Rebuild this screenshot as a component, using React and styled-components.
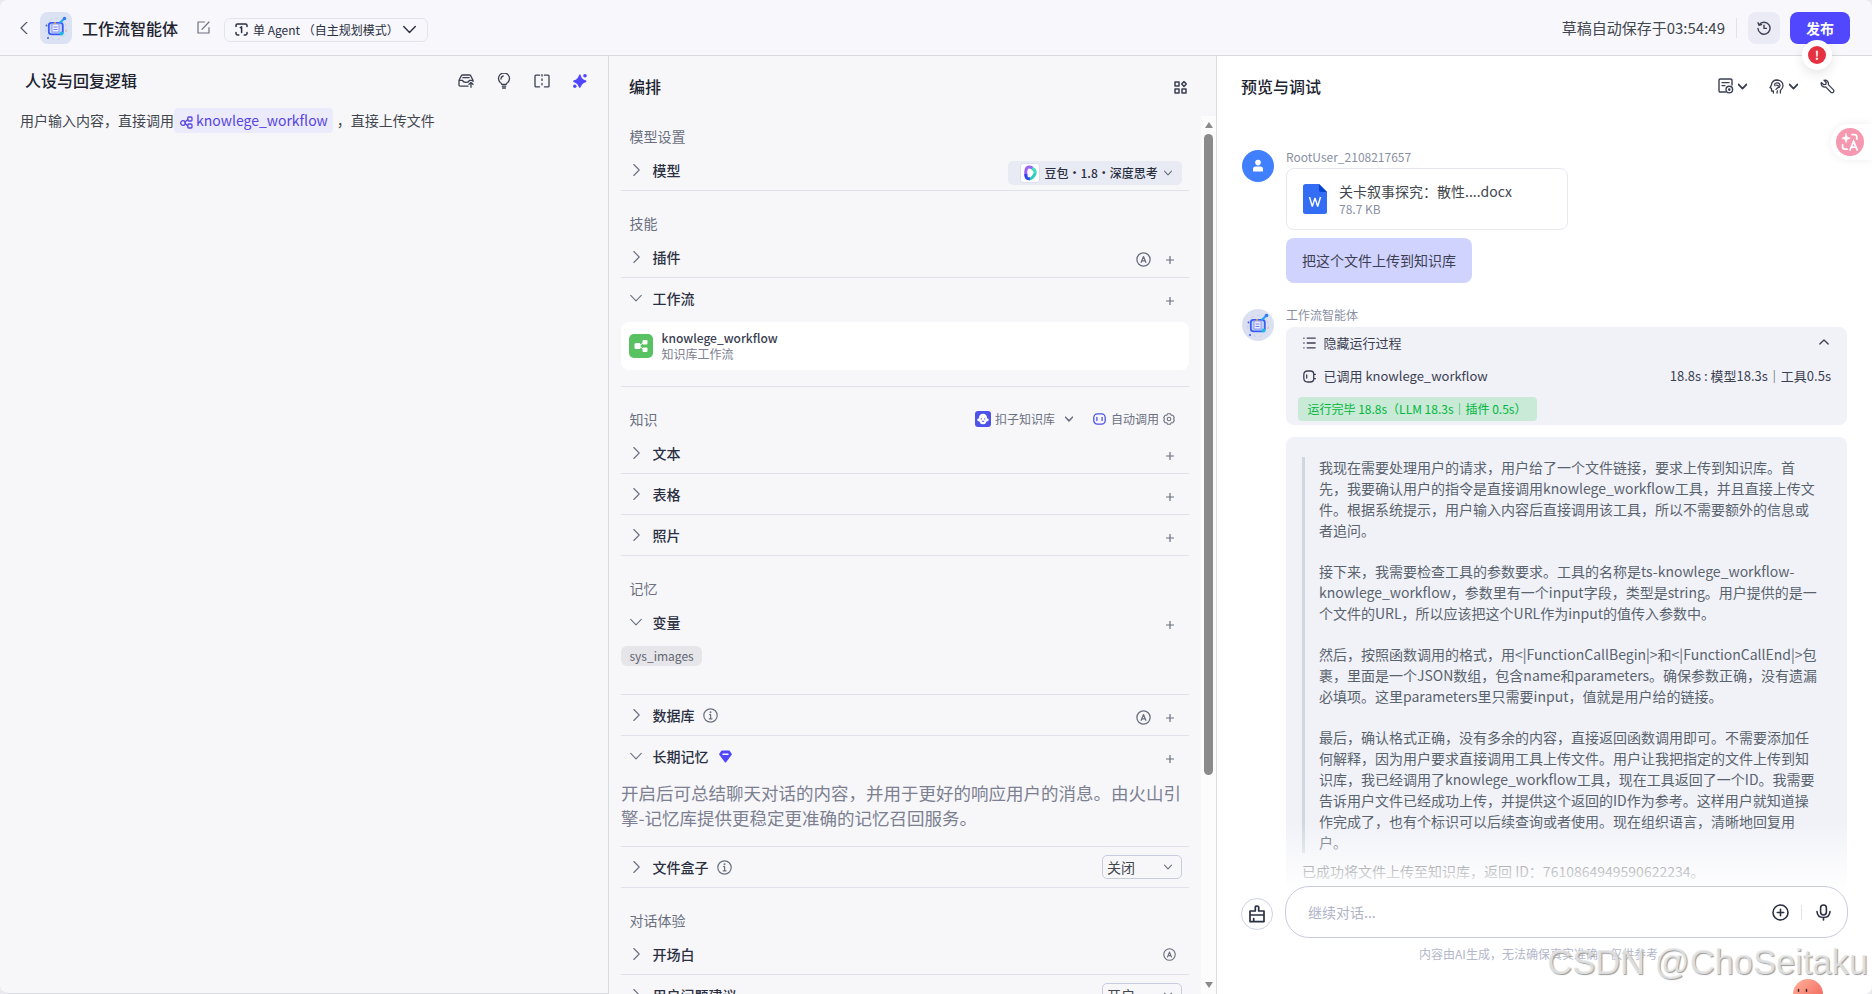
import React from "react";
import styled, { createGlobalStyle, css } from "styled-components";

const quoteParagraphs = [
  "我现在需要处理用户的请求，用户给了一个文件链接，要求上传到知识库。首先，我要确认用户的指令是直接调用knowlege_workflow工具，并且直接上传文件。根据系统提示，用户输入内容后直接调用该工具，所以不需要额外的信息或者追问。",
  "接下来，我需要检查工具的参数要求。工具的名称是ts-knowlege_workflow-knowlege_workflow，参数里有一个input字段，类型是string。用户提供的是一个文件的URL，所以应该把这个URL作为input的值传入参数中。",
  "然后，按照函数调用的格式，用<|FunctionCallBegin|>和<|FunctionCallEnd|>包裹，里面是一个JSON数组，包含name和parameters。确保参数正确，没有遗漏必填项。这里parameters里只需要input，值就是用户给的链接。",
  "最后，确认格式正确，没有多余的内容，直接返回函数调用即可。不需要添加任何解释，因为用户要求直接调用工具上传文件。用户让我把指定的文件上传到知识库，我已经调用了knowlege_workflow工具，现在工具返回了一个ID。我需要告诉用户文件已经成功上传，并提供这个返回的ID作为参考。这样用户就知道操作完成了，也有个标识可以后续查询或者使用。现在组织语言，清晰地回复用户。",
];

const Svg = ({ w = 16, h = w, box, sw = 1.3, children }) => (
  <svg
    width={w}
    height={h}
    viewBox={box || `0 0 ${w} ${h}`}
    fill="none"
    stroke="currentColor"
    strokeWidth={sw}
    strokeLinecap="round"
    strokeLinejoin="round"
  >
    {children}
  </svg>
);

const Chevron = ({ dir = "down", size = 12, sw = 1.3 }) => {
  const paths = {
    down: "M0.7 3.3L6 8.8L11.3 3.3",
    up: "M1 8.5L6 3.5L11 8.5",
    right: "M3.8 0.5L9.2 6L3.8 11.5",
    left: "M9 0L3 6L9 12",
  };
  return (
    <Svg w={size} box="0 0 12 12" sw={(sw * 12) / size}>
      <path d={paths[dir]} />
    </Svg>
  );
};

const RobotIcon = ({ size = 32 }) => (
  <svg width={size} height={size} viewBox="0 0 32 32" fill="none">
    <circle cx="16" cy="17" r="10.5" stroke="#c3c9f0" strokeWidth="0.8" strokeDasharray="3 3" />
    <rect x="8.8" y="10.8" width="14" height="11.5" rx="2.5" fill="#c4d3fb" stroke="#3b5cf5" strokeWidth="1.8" />
    <rect x="12" y="12" width="7" height="8" fill="#edf0ff" stroke="#8d94ee" />
    <path d="M13.5 15h4M13.5 17.5h4" stroke="#737be0" />
    <path d="M19.5 11l4-3.5" stroke="#24a5f2" strokeWidth="2" />
    <circle cx="24.5" cy="6.5" r="1.8" fill="#2f7bf4" />
    <circle cx="21.5" cy="21.5" r="2" fill="#17bde0" />
    <circle cx="6.5" cy="13.5" r="0.9" fill="#3b5cf5" />
    <circle cx="8" cy="26" r="1" fill="#3b5cf5" />
    <circle cx="15" cy="11" r="1" fill="#f7a64b" />
    <circle cx="26" cy="19" r="0.8" fill="#f2b37a" />
  </svg>
);

const PlusIcon = () => (
  <Svg w={8} sw={1.2}>
    <path d="M4 0.3v7.4M0.3 4h7.4" />
  </Svg>
);

const AutoIcon = ({ size = 15 }) => (
  <Svg w={size} box="0 0 15 15" sw={1.3}>
    <circle cx="7.5" cy="7.5" r="6.6" />
    <path d="M5.2 10.3L7.5 4.6l2.3 5.7M6 8.8h3" />
  </Svg>
);

const InfoIcon = () => (
  <Svg w={15} sw={1.2}>
    <circle cx="7.5" cy="7.5" r="6.7" />
    <path d="M6.6 6.7h1v4M6.2 10.8h2.8" />
    <circle cx="7.5" cy="4.3" r="0.4" fill="currentColor" />
  </Svg>
);

const WorkflowIcon = () => (
  <Svg w={13} h={14} sw={1.3}>
    <circle cx="3" cy="8" r="2.3" />
    <rect x="7.8" y="2" width="4.2" height="4" rx="1" />
    <rect x="7.8" y="9" width="4.2" height="4" rx="1" />
    <path d="M5 7L7.8 4.5M5.200 8.600L7.800 11" />
  </Svg>
);

const Row = ({ title, open, extra, children }) => (
  <RowHead>
    <ArrowBox>
      <Chevron dir={open ? "down" : "right"} size={12} sw={1.1} />
    </ArrowBox>
    <RowTitle>{title}</RowTitle>
    {extra}
    {children}
  </RowHead>
);

const Actions = ({ auto, plus = true }) => (
  <RowActions $plus={plus}>
    {auto && <AutoIcon size={plus ? 15 : 13} />}
    {plus && <PlusIcon />}
  </RowActions>
);

const App = () => {
  return (
    <Page>
      <GlobalStyle />
      <Header>
        <Chevron dir="left" size={12} sw={1.2} />
        <BotLogo>
          <RobotIcon />
        </BotLogo>
        <BotName>工作流智能体</BotName>
        <EditButton>
          <Svg w={13} sw={1.2}>
            <path d="M7.5 1H1v11h11V6.5M5 8.3L12 1" />
          </Svg>
        </EditButton>
        <ModePill>
          <Svg w={13} sw={1.5}>
            <path d="M1 3.6V2.4Q1 1 2.4 1h8.2Q12 1 12 2.4v1.2M1 9.4v1.2Q1 12 2.4 12h1.4M12 9.4v1.2Q12 12 10.6 12H9.2M5.3 4.6L6.6 3.8V9.4" />
          </Svg>
          <span>单 Agent （自主规划模式）</span>
          <Chevron size={13} sw={1.4} />
        </ModePill>
        <HeaderRight>
          <SaveTip>草稿自动保存于03:54:49</SaveTip>
          <HeaderLine />
          <HistoryButton>
            <Svg w={14} sw={1.4}>
              <path d="M2.2 3.6A6 6 0 1 1 1 7.5M1 1.8l1 2.4 2.6-.6M7 4.2V7.4h2.4" />
            </Svg>
          </HistoryButton>
          <PublishButton>
            发布
            <ErrorBadge>
              <ErrorDot>!</ErrorDot>
            </ErrorBadge>
          </PublishButton>
        </HeaderRight>
      </Header>

      <Body>
        <PromptPanel>
          <PromptHead>
            <PanelTitle>人设与回复逻辑</PanelTitle>
            <PromptTools>
              <Svg w={16}>
                <path d="M10 13.2H2.2Q1 13.2 1 12V7.2L3.4 2.6Q3.7 2 4.4 2h7.2q.7 0 1 .6L15 7.2v1.3M1 7.4h3.6q.4 2 3.4 2t3.4-2H15M4.8 4.6h6.4M13 14.3V9.6M11 11.2l2-1.8 2 1.8" />
              </Svg>
              <Svg w={16}>
                <path d="M5.8 11.3Q5.6 10.2 4.2 9.500A5.500 5.500 0 1 1 11.800 9.500Q10.4 10.2 10.2 11.3zM6.3 13.2h3.4M6.6 15h2.8M5 6A3 3 0 0 1 7.2 3" />
              </Svg>
              <Svg w={16}>
                <path d="M5.6 2.2H1.9Q1 2.2 1 3.1v9.8q0 .9.9.9h3.7M10.4 2.2h3.7q.9 0 .9.9v9.8q0 .9-.9.9h-3.7" />
                <path d="M8 1.6v13" strokeDasharray="1.4 3" />
              </Svg>
              <SparkIcon viewBox="0 0 16 16">
                <path d="M7.8 2.6Q8.8 7 13.4 8.2Q9 9.400 7.800 13.800Q6.600 9.400 2.200 8.2Q6.800 7 7.800 2.600z" stroke="#5147ff" strokeWidth="2" strokeLinejoin="round" />
                <circle cx="13" cy="2.8" r="1.8" />
                <circle cx="2.8" cy="13.2" r="1.7" />
              </SparkIcon>
            </PromptTools>
          </PromptHead>
          <PromptText>
            用户输入内容，直接调用
            <FlowTag>
              <WorkflowIcon />
              knowlege_workflow
            </FlowTag>
            ，直接上传文件
          </PromptText>
        </PromptPanel>

        <ConfigPanel>
          <ConfigHead>
            <PanelTitle>编排</PanelTitle>
            <Svg w={13} sw={1.5}>
              <rect x="1" y="1" width="4" height="4" />
              <rect x="1" y="8" width="4" height="4" />
              <rect x="8" y="8" width="4" height="4" />
              <path d="M10 0.6L12.3 3 10 5.4 7.7 3z" />
            </Svg>
          </ConfigHead>
          <ConfigScroll>
            <ConfigList>
              <SectionTitle $first>模型设置</SectionTitle>
              <Row title="模型">
                <ModelChip>
                  <ModelLogo>
                    <svg width="14" height="16" viewBox="0 0 14 16" fill="none" strokeWidth="3">
                      <path d="M3 11Q1.6 2 6.5 2Q9 2 9.5 4" stroke="#9a62f8" />
                      <path d="M9 3.5Q13 5 12 9" stroke="#43dcc0" />
                      <path d="M12 8.5Q10 13.5 6 14" stroke="#27cdb8" />
                      <path d="M2.8 9Q2.5 14 6.8 13.8" stroke="#3346ee" />
                    </svg>
                  </ModelLogo>
                  <span>豆包・1.8・深度思考</span>
                  <SmallArrow>
                    <Chevron size={8} sw={1.1} />
                  </SmallArrow>
                </ModelChip>
              </Row>
              <Divider />

              <SectionTitle>技能</SectionTitle>
              <Row title="插件">
                <Actions auto />
              </Row>
              <Divider />
              <Row title="工作流" open>
                <Actions />
              </Row>
              <FlowCard>
                <FlowLogo>
                  <svg width="14" height="14" viewBox="0 0 14 14" fill="#fff">
                    <rect x="0.5" y="4" width="6" height="6" rx="1.5" />
                    <rect x="8.5" y="1" width="5" height="4.6" rx="1" />
                    <rect x="8.5" y="8.4" width="5" height="4.6" rx="1" />
                    <path d="M5 7L10 3.4M5 7l5 3.6" stroke="#fff" />
                  </svg>
                </FlowLogo>
                <FlowInfo>
                  <FlowName>knowlege_workflow</FlowName>
                  <FlowDesc>知识库工作流</FlowDesc>
                </FlowInfo>
              </FlowCard>
              <Divider />

              <SectionTitle>
                知识
                <KnowledgeTools>
                  <KnowledgeLogo>
                    <svg width="12" height="12" viewBox="0 0 12 12">
                      <path d="M6 0.8Q10 1 10 5.2Q11.8 5.4 11.8 7Q11.6 8.4 9.6 8.4Q9 11 6 11.2Q3 11 2.4 8.4Q.4 8.4.2 7Q.2 5.4 2 5.2Q2 1 6 .8z" fill="#fff" />
                      <path d="M4.3 5.3v1.2M7.7 5.3v1.2M4.8 8Q6 9 7.2 8" stroke="#4d53e8" fill="none" />
                    </svg>
                  </KnowledgeLogo>
                  <span>扣子知识库</span>
                  <KnowledgeArrow>
                    <Chevron size={8} sw={1.6} />
                  </KnowledgeArrow>
                  <CallIcon>
                    <Svg w={13} h={12} sw={1.3}>
                      <rect x="0.8" y="0.9" width="11.4" height="10.2" rx="3.6" />
                      <path d="M3.9 4.3v3.2M9.1 4.3v3.2" />
                    </Svg>
                  </CallIcon>
                  <span>自动调用</span>
                  <GearBox>
                    <Svg w={12} sw={1.1}>
                      <path d="M4.6.8h2.8l.8 1.4 1.700.1L11.300 4.600 10.600 6l.7 1.400-1.400 2.300-1.700.1-.8 1.400H4.600l-.8-1.400-1.700-.1L.7 7.400 1.400 6 .7 4.600 2.100 2.300l1.700-.1z" />
                      <circle cx="6" cy="6" r="1.8" />
                    </Svg>
                  </GearBox>
                </KnowledgeTools>
              </SectionTitle>
              <Row title="文本">
                <Actions />
              </Row>
              <Divider />
              <Row title="表格">
                <Actions />
              </Row>
              <Divider />
              <Row title="照片">
                <Actions />
              </Row>
              <Divider />

              <SectionTitle>记忆</SectionTitle>
              <Row title="变量" open>
                <Actions />
              </Row>
              <VarTag>sys_images</VarTag>
              <Divider />
              <Row
                title="数据库"
                extra={
                  <ExtraIcon>
                    <InfoIcon />
                  </ExtraIcon>
                }
              >
                <Actions auto />
              </Row>
              <Divider />
              <Row
                title="长期记忆"
                open
                extra={
                  <ExtraIcon $gem>
                    <svg width="13" height="13" viewBox="0 0 13 13">
                      <path d="M3 .5h7q.5 0 .8.4l1.9 2.8q.4.5 0 1L7.1 12.2q-.6.7-1.2 0L.3 4.7q-.3-.5 0-1L2.2.9Q2.5.5 3 .5z" fill="#5147ff" />
                      <path d="M4 4.3h5" stroke="#fff" strokeWidth="1.4" strokeLinecap="round" />
                    </svg>
                  </ExtraIcon>
                }
              >
                <Actions />
              </Row>
              <MemoryText>
                开启后可总结聊天对话的内容，并用于更好的响应用户的消息。由火山引擎-记忆库提供更稳定更准确的记忆召回服务。
              </MemoryText>
              <Divider />
              <Row
                title="文件盒子"
                extra={
                  <ExtraIcon>
                    <InfoIcon />
                  </ExtraIcon>
                }
              >
                <Select>
                  关闭
                  <SmallArrow>
                    <Chevron size={8} sw={1.1} />
                  </SmallArrow>
                </Select>
              </Row>
              <Divider />

              <SectionTitle>对话体验</SectionTitle>
              <Row title="开场白">
                <Actions auto plus={false} />
              </Row>
              <Divider />
              <Row title="用户问题建议">
                <Select>
                  开启
                  <SmallArrow>
                    <Chevron size={8} sw={1.1} />
                  </SmallArrow>
                </Select>
              </Row>
            </ConfigList>
            <ScrollBar>
              <ScrollArrow />
              <ScrollThumb />
              <ScrollArrow $down />
            </ScrollBar>
          </ConfigScroll>
        </ConfigPanel>

        <PreviewPanel>
          <PreviewHead>
            <PanelTitle>预览与调试</PanelTitle>
            <PreviewTools>
              <Svg w={16} sw={1.4}>
                <path d="M7.4 14H2.3Q1 14 1 12.7V2.3Q1 1 2.3 1h10.4Q14 1 14 2.3V7M4 4.6h7M4 7.6h3" />
                <circle cx="11.3" cy="11.6" r="3.3" />
                <circle cx="11.3" cy="11.6" r="0.6" fill="currentColor" />
              </Svg>
              <Chevron size={9} sw={1.8} />
              <HeadIcon>
                <Svg w={15} sw={1.3}>
                  <path d="M4.4 14v-2H2.5V9.3L1 8.6l1.4-2.5Q3 1 8 1q5.8.4 6 5.8 0 2.6-2.6 4.6V14M8.4 12l-.4 2" />
                  <path d="M6 6.8Q5 4.2 7.8 3.8q3-.2 3.2 2.6Q10.8 8.6 8.6 8.8L7 10.4M7.6 6.2l1.8.6" />
                </Svg>
              </HeadIcon>
              <Chevron size={9} sw={1.8} />
              <WrenchIcon>
                <Svg w={15} sw={1.3}>
                  <path d="M4 1.300Q6 .6 7.500 2.200 8.800 3.600 8.300 5.600L13.500 10.900q.8 1.200-.2 2.300-1.200.9-2.400 0L5.700 7.900Q3.700 8.400 2.200 7 .7 5.500 1.400 3.500L3.700 5.700 5.800 5.400 6.200 3.500z" />
                </Svg>
              </WrenchIcon>
            </PreviewTools>
          </PreviewHead>

          <Messages>
            <Message>
              <UserAvatar>
                <svg width="12" height="14" viewBox="0 0 12 14" fill="#fff">
                  <circle cx="6" cy="3.6" r="2.8" />
                  <path d="M1 12V10.4Q1 7.6 3.8 7.6h4.4Q11 7.6 11 10.4V12q0 .6-.6.6H1.6Q1 12.600 1 12z" />
                </svg>
              </UserAvatar>
              <MessageBody>
                <Sender $user>RootUser_2108217657</Sender>
                <FileCard>
                  <svg width="24" height="30" viewBox="0 0 24 30">
                    <path d="M2.500 0H16l8 8v19.500q0 2.500-2.500 2.500h-19Q0 30 0 27.500v-25Q0 0 2.500 0z" fill="#336df4" />
                    <path d="M16 0l8 8h-6q-2 0-2-2z" fill="#0442d2" />
                    <path d="M6.500 13l2.800 9.500L12 14l2.700 8.500L17.500 13" fill="none" stroke="#fff" strokeWidth="1.400" strokeLinejoin="bevel" />
                  </svg>
                  <div>
                    <FileName>关卡叙事探究：散性....docx</FileName>
                    <FileSize>78.7 KB</FileSize>
                  </div>
                </FileCard>
                <UserBubble>把这个文件上传到知识库</UserBubble>
              </MessageBody>
            </Message>

            <Message>
              <BotAvatar>
                <RobotIcon />
              </BotAvatar>
              <MessageBody>
                <Sender>工作流智能体</Sender>
                <RunCard>
                  <RunLine>
                    <Svg w={13} h={12} sw={1.3}>
                      <path d="M4.200 1.200h8M4.200 6h8M4.200 10.800h8M.8 1.200h.3M.8 6h.3M.8 10.800h.3" />
                    </Svg>
                    <span>隐藏运行过程</span>
                    <RunRight $arrow>
                      <Chevron dir="up" size={10} sw={1.3} />
                    </RunRight>
                  </RunLine>
                  <RunLine $second>
                    <Svg w={13} h={13} sw={1.3}>
                      <path d="M10.700 3.300Q10.300 1 7.500 1H4.700Q.8 1 .8 5v3q0 4 3.900 4h2.800q2.800 0 3.200-2.300M3.700 5v3M10.700 3.300v6.400M10.800 4.300h1.600M10.800 8.700h1.600" />
                    </Svg>
                    <span>已调用 knowlege_workflow</span>
                    <RunRight>18.8s : 模型18.3s｜工具0.5s</RunRight>
                  </RunLine>
                  <RunTag>运行完毕 18.8s（LLM 18.3s｜插件 0.5s）</RunTag>
                </RunCard>
                <AnswerCard>
                  <Quote>
                    {quoteParagraphs.map((text, i) => (
                      <p key={i}>{text}</p>
                    ))}
                  </Quote>
                  <Answer>已成功将文件上传至知识库，返回 ID：7610864949590622234。</Answer>
                </AnswerCard>
              </MessageBody>
            </Message>
            <Fade />
          </Messages>

          <InputRow>
            <ClearButton>
              <Svg w={16} h={18} sw={1.700}>
                <path d="M6.300 6V2.200Q6.300 1 8 1t1.700 1.200V6H15v10.600H1V6zM1 10h14M4.700 13.600v3" />
              </Svg>
            </ClearButton>
            <ChatInput>
              <Placeholder>继续对话...</Placeholder>
              <Svg w={17} sw={1.600}>
                <circle cx="8.500" cy="8.500" r="7.500" />
                <path d="M8.500 5.300v6.400M5.300 8.500h6.400" />
              </Svg>
              <InputLine />
              <Svg w={15} h={17} sw={1.600}>
                <rect x="4.600" y="1" width="5.800" height="10" rx="2.900" />
                <path d="M1 7.500q.4 6 6.500 6T14 7.500M7.500 13.500V16" />
              </Svg>
            </ChatInput>
          </InputRow>
          <Disclaimer>内容由AI生成，无法确保真实准确，仅供参考。</Disclaimer>

          <TranslateTab>
            <TranslateDot>
              <svg width="18" height="18" viewBox="0 0 18 18" fill="none" stroke="#fff" strokeWidth="1.800" strokeLinecap="round">
                <path d="M5 .8L6.100 4 9.300 5.200 6.100 6.400 5 9.600 3.900 6.400.8 5.200 3.900 4z" fill="#fff" strokeWidth=".6" />
                <path d="M11 1.600h2.500q2.300 0 2.300 2.200V6M1.600 12v1.800q0 2.400 2.400 2.400h2" />
                <path d="M9 17l3.600-8.600L16.200 17M10.300 14.200h4.600" />
              </svg>
            </TranslateDot>
          </TranslateTab>
          <Mascot>
            <svg width="30" height="15" viewBox="0 0 30 15">
              <defs>
                <linearGradient id="mascot" x1="0" y1="0" x2="1" y2="1">
                  <stop offset="0.1" stopColor="#ffab95" />
                  <stop offset="0.8" stopColor="#f26a60" />
                </linearGradient>
              </defs>
              <circle cx="15" cy="15" r="15" fill="url(#mascot)" />
              <path d="M5.500 10.500v1.800M13.500 10.500v1.800" stroke="#3a2020" strokeWidth="1.500" strokeLinecap="round" />
            </svg>
          </Mascot>
          <Watermark>CSDN @ChoSeitaku</Watermark>
        </PreviewPanel>
      </Body>
    </Page>
  );
};

export default App;

const GlobalStyle = createGlobalStyle`
  * {
    box-sizing: border-box;
  }

  body {
    margin: 0;
    background: #e9e9ee;
    overflow: hidden;
    font-family: "Noto Sans CJK SC", "Noto Sans", sans-serif;
    color: #2b2f42;
  }

  svg {
    display: block;
    flex-shrink: 0;
  }
`;

const Page = styled.div`
  display: flex;
  flex-direction: column;
  width: 100vw;
  height: 100vh;
  overflow: hidden;
  border-radius: 8px;
  background: #f7f7fa;
`;

const Header = styled.header`
  display: flex;
  align-items: center;
  height: 56px;
  flex-shrink: 0;
  padding: 0 22px 0 18px;
  border-bottom: 1px solid #dadae1;
  background: #f7f7fc;
  color: #55586a;
`;

const BotLogo = styled.div`
  width: 32px;
  height: 32px;
  margin-left: 10px;
  border-radius: 8px;
  background: #dbe2f1;
`;

const BotName = styled.div`
  margin-left: 10px;
  font-size: 16px;
  font-weight: 500;
  line-height: 24px;
  color: #20232f;
`;

const EditButton = styled.div`
  margin-left: 19px;
  color: #6e7080;
`;

const ModePill = styled.div`
  display: flex;
  align-items: center;
  width: 204px;
  height: 24px;
  margin: 4px 0 0 14px;
  padding: 0 11px 0 10px;
  border: 1px solid #e4e4ec;
  border-radius: 6px;
  font-size: 12px;
  color: #2b2f42;

  span {
    flex: 1;
    margin-left: 5px;
    white-space: nowrap;
  }
`;

const HeaderRight = styled.div`
  display: flex;
  align-items: center;
  margin-left: auto;
`;

const SaveTip = styled.div`
  font-size: 15px;
  color: #42464e;
`;

const HeaderLine = styled.div`
  width: 1px;
  height: 20px;
  margin: 0 11px;
  background: #e2e2ea;
`;

const HistoryButton = styled.div`
  display: flex;
  align-items: center;
  justify-content: center;
  width: 32px;
  height: 32px;
  margin-right: 10px;
  border-radius: 8px;
  background: #ebebf5;
  color: #3b3f52;
`;

const PublishButton = styled.div`
  position: relative;
  width: 60px;
  height: 32px;
  border-radius: 8px;
  background: #5147ff;
  color: #fff;
  font-size: 14px;
  font-weight: 700;
  line-height: 32px;
  text-align: center;
`;

const ErrorBadge = styled.div`
  position: absolute;
  z-index: 2;
  top: 28px;
  left: 12px;
  display: flex;
  align-items: center;
  justify-content: center;
  width: 30px;
  height: 30px;
  border-radius: 50%;
  background: #fff;
  box-shadow: 0 4px 12px rgba(0, 0, 0, 0.1);
`;

const ErrorDot = styled.div`
  width: 18px;
  height: 18px;
  border-radius: 50%;
  background: #e53241;
  font-size: 12px;
  line-height: 17px;
`;

const Body = styled.div`
  display: flex;
  flex: 1;
  min-height: 0;
`;

const PromptPanel = styled.section`
  width: 609px;
  flex-shrink: 0;
  border-right: 1px solid #dadae1;
  border-bottom: 1px solid #dadae1;
  border-radius: 0 0 0 8px;
`;

const PromptHead = styled.div`
  display: flex;
  align-items: center;
  justify-content: space-between;
  height: 50px;
  padding: 0 20px 0 25px;
`;

const PanelTitle = styled.div`
  padding-bottom: 2px;
  font-size: 16px;
  font-weight: 500;
  line-height: 24px;
  color: #20232f;
`;

const PromptTools = styled.div`
  display: flex;
  gap: 22px;
  color: #3b3f52;
`;

const SparkIcon = styled.svg`
  width: 16px;
  height: 16px;
  fill: #5147ff;
`;

const PromptText = styled.div`
  display: flex;
  align-items: flex-start;
  padding: 2px 20px;
  font-size: 14px;
  line-height: 24px;
  color: #42464e;
`;

const FlowTag = styled.span`
  display: flex;
  align-items: flex-start;
  gap: 3px;
  height: 25px;
  margin-right: 4px;
  padding: 0 5px 0 6px;
  border-radius: 4px;
  background: #ebebfb;
  color: #5744e0;

  svg {
    margin-top: 7px;
  }
`;

const ConfigPanel = styled.section`
  display: flex;
  flex-direction: column;
  width: 608px;
  flex-shrink: 0;
  border-right: 1px solid #dadae1;
`;

const ConfigHead = styled.div`
  display: flex;
  align-items: center;
  justify-content: space-between;
  height: 60px;
  flex-shrink: 0;
  padding: 2px 29px 0 20px;
  color: #3b3f52;
`;

const ConfigScroll = styled.div`
  display: flex;
  flex: 1;
  min-height: 0;
  overflow: hidden;
`;

const ConfigList = styled.div`
  width: 592px;
  padding: 0 12px;
  color: #6b7080;
`;

const SectionTitle = styled.div`
  display: flex;
  align-items: center;
  height: ${(props) => (props.$first ? "34px" : "46px")};
  padding: ${(props) => (props.$first ? "6px" : "18px")} 8px 0 8.5px;
  font-size: 14px;
  line-height: 20px;
  color: #6b7080;
`;

const Divider = styled.div`
  height: 1px;
  background: #e1e1eb;
`;

const RowHead = styled.div`
  display: flex;
  align-items: center;
  height: 40px;
  padding: 0 7px 0 9px;
`;

const ArrowBox = styled.div`
  width: 22.5px;
`;

const RowTitle = styled.div`
  font-size: 14px;
  font-weight: 500;
  line-height: 20px;
  color: #2b2f42;
`;

const ExtraIcon = styled.div`
  margin-left: ${(props) => (props.$gem ? "10px" : "8px")};
`;

const RowActions = styled.div`
  display: flex;
  align-items: center;
  gap: 15px;
  margin-left: auto;
  padding: ${(props) => (props.$plus ? "5px 8px 0 0" : "0 6px 0 0")};
`;

const SmallArrow = styled.div`
  color: #6b7080;
`;

const ModelChip = styled.div`
  display: flex;
  align-items: center;
  width: 174px;
  height: 24px;
  margin: 6px 0 0 auto;
  padding: 0 10px 0 12px;
  border-radius: 5px;
  background: #e8ebf3;
  font-size: 12px;
  font-weight: 500;
  line-height: 18px;
  color: #2b2f42;

  span {
    flex: 1;
    margin-left: 4.5px;
    padding-bottom: 1px;
    white-space: nowrap;
  }
`;

const ModelLogo = styled.div`
  display: flex;
  align-items: center;
  justify-content: center;
  width: 20px;
  height: 20px;
  border: 1px solid #dcdfee;
  border-radius: 3px;
  background: #fff;
`;

const FlowCard = styled.div`
  display: flex;
  align-items: center;
  height: 48px;
  margin: 4px 0 16px;
  padding: 0 8px;
  border-radius: 8px;
  background: #fff;
`;

const FlowLogo = styled.div`
  display: flex;
  align-items: center;
  justify-content: center;
  width: 24px;
  height: 24px;
  border-radius: 5px;
  background: #58c162;
`;

const FlowInfo = styled.div`
  margin-left: 8.5px;
  font-size: 12px;
  line-height: 16px;
`;

const FlowName = styled.div`
  font-weight: 500;
  color: #3b3f52;
`;

const FlowDesc = styled.div`
  color: #7c8090;
`;

const KnowledgeTools = styled.div`
  display: flex;
  align-items: center;
  margin-left: auto;
  padding-right: 6px;
  font-size: 12px;
`;

const KnowledgeLogo = styled.div`
  display: flex;
  align-items: center;
  justify-content: center;
  width: 16px;
  height: 16px;
  margin-right: 4px;
  border-radius: 3px;
  background: #4d53e8;
`;

const KnowledgeArrow = styled.div`
  margin: 0 20px 0 10px;
`;

const CallIcon = styled.div`
  margin-right: 5px;
  color: #4d53e8;
`;

const GearBox = styled.div`
  margin-left: 4px;
`;

const VarTag = styled.div`
  width: fit-content;
  height: 20px;
  margin: 4px 0 28px;
  padding: 0 8.5px;
  border-radius: 6px;
  background: #e6e6ea;
  font-size: 12px;
  line-height: 20px;
  color: #62656f;
`;

const MemoryText = styled.div`
  width: 566px;
  margin: 4px 0 16px;
  font-size: 17.5px;
  line-height: 25px;
  color: #7c8090;
`;

const Select = styled.div`
  display: flex;
  align-items: center;
  justify-content: space-between;
  width: 80px;
  height: 24px;
  margin-left: auto;
  padding: 0 9px 0 4px;
  border: 1px solid #c9ccdf;
  border-radius: 5px;
  font-size: 14px;
  line-height: 20px;
  color: #42464e;
`;

const ScrollBar = styled.div`
  display: flex;
  flex-direction: column;
  align-items: center;
  width: 15px;
  padding: 6px 0;
  background: #fcfcfd;
`;

const ScrollArrow = styled.div`
  width: 0;
  height: 0;
  border-left: 4.5px solid transparent;
  border-right: 4.5px solid transparent;
  ${(props) =>
    props.$down
      ? css`
          margin-top: auto;
          border-top: 6px solid #8b8b8b;
        `
      : css`
          border-bottom: 6px solid #8b8b8b;
        `}
`;

const ScrollThumb = styled.div`
  width: 9px;
  height: 641px;
  margin-top: 6px;
  border-radius: 5px;
  background: #8b8b8b;
`;

const PreviewPanel = styled.section`
  position: relative;
  display: flex;
  flex-direction: column;
  flex: 1;
  min-width: 0;
  background: #fff;
`;

const PreviewHead = styled.div`
  display: flex;
  align-items: center;
  justify-content: space-between;
  height: 60px;
  flex-shrink: 0;
  padding: 2px 37px 0 24px;
`;

const PreviewTools = styled.div`
  display: flex;
  align-items: center;
  gap: 4px;
  margin-top: -2px;
  color: #3b3f52;
`;

const HeadIcon = styled.div`
  margin: 0 1px 0 18px;
`;

const WrenchIcon = styled.div`
  margin-left: 18px;
`;

const Messages = styled.div`
  position: relative;
  height: 770px;
  flex-shrink: 0;
  overflow: hidden;
  padding: 34px 25px 0 24px;
`;

const Message = styled.div`
  display: flex;
  gap: 12px;
  margin-bottom: 24px;
`;

const UserAvatar = styled.div`
  display: flex;
  align-items: center;
  justify-content: center;
  width: 32px;
  height: 32px;
  margin-left: 1px;
  border-radius: 50%;
  background: #4080ff;
`;

const BotAvatar = styled(UserAvatar)`
  margin-top: 2px;
  background: #dbe0f1;
`;

const MessageBody = styled.div`
  flex: 1;
`;

const Sender = styled.div`
  height: 18px;
  font-size: 12px;
  line-height: ${(props) => (props.$user ? "13px" : "15px")};
  color: #8a8fa3;
`;

const FileCard = styled.div`
  display: flex;
  align-items: center;
  gap: 12px;
  width: 282px;
  height: 62px;
  padding: 0 16px;
  border: 1px solid #e7e7ef;
  border-radius: 8px;
`;

const FileName = styled.div`
  font-size: 14px;
  line-height: 20px;
  color: #42464e;
`;

const FileSize = styled.div`
  font-size: 12px;
  line-height: 16px;
  color: #8a8fa3;
`;

const UserBubble = styled.div`
  width: fit-content;
  height: 45px;
  margin-top: 8px;
  padding: 0 16px;
  border-radius: 8px;
  background: #d1d3ff;
  font-size: 14px;
  line-height: 45px;
  color: #3b3f52;
`;

const RunCard = styled.div`
  height: 98px;
  margin-top: 2px;
  border-radius: 8px;
  background: #f1f2f8;
`;

const RunLine = styled.div`
  display: flex;
  align-items: center;
  gap: 8px;
  height: ${(props) => (props.$second ? "34px" : "32px")};
  padding: 0 16px 0 16.5px;
  font-size: 13px;
  line-height: 18px;
  color: #3b3f52;

  span {
    padding-bottom: 1px;
  }
`;

const RunRight = styled.div`
  margin-left: auto;
  padding: ${(props) => (props.$arrow ? "0 2px 2px 0" : "0 0 1px 0")};
`;

const RunTag = styled.div`
  width: 239px;
  height: 24px;
  margin: 4px 0 0 12px;
  padding-left: 9.5px;
  border-radius: 4px;
  background: #c8ead6;
  font-size: 12px;
  line-height: 24px;
  white-space: nowrap;
  color: #00b63d;
`;

const AnswerCard = styled.div`
  height: 500px;
  margin-top: 12px;
  padding: 20px 16px;
  border-radius: 8px 8px 0 0;
  background: #f1f2f8;
`;

const Quote = styled.div`
  display: flex;
  flex-direction: column;
  gap: 20px;
  width: 517px;
  padding-left: 14px;
  border-left: 3px solid #d0d7de;
  font-size: 14px;
  line-height: 21px;
  color: #59636e;

  p {
    margin: 0;
  }
`;

const Answer = styled.div`
  margin-top: 7px;
  font-size: 14px;
  line-height: 22px;
  color: #2b2f36;
`;

const Fade = styled.div`
  position: absolute;
  right: 0;
  bottom: 0;
  left: 0;
  height: 64px;
  background: linear-gradient(rgba(255, 255, 255, 0), rgba(255, 255, 255, 0.92));
`;

const InputRow = styled.div`
  display: flex;
  align-items: center;
  gap: 12px;
  padding: 0 24px;
`;

const ClearButton = styled.div`
  display: flex;
  align-items: center;
  justify-content: center;
  width: 32px;
  height: 32px;
  margin-top: 4px;
  border: 1px solid #cfd2e2;
  border-radius: 50%;
  color: #2b2f42;
`;

const ChatInput = styled.div`
  display: flex;
  align-items: center;
  flex: 1;
  height: 52px;
  padding: 0 16px 0 22px;
  border: 1px solid #c9ccdf;
  border-radius: 24px;
  color: #2b2f42;
`;

const Placeholder = styled.div`
  flex: 1;
  font-size: 14px;
  color: #b0b4c8;
`;

const InputLine = styled.div`
  width: 1px;
  height: 15px;
  margin: 0 14px 0 12px;
  background: #e2e2ea;
`;

const Disclaimer = styled.div`
  margin-top: 7px;
  font-size: 12px;
  line-height: 18px;
  text-align: center;
  color: #b3b7ca;
`;

const TranslateTab = styled.div`
  position: absolute;
  top: 68px;
  right: 0;
  width: 41px;
  height: 36px;
  padding: 4px 5px;
  border-radius: 18px 0 0 18px;
  background: #fff;
  box-shadow: 0 0 8px rgba(0, 0, 0, 0.07);
`;

const TranslateDot = styled.div`
  display: flex;
  align-items: center;
  justify-content: center;
  width: 28px;
  height: 28px;
  border-radius: 50%;
  background: #f598b0;
`;

const Mascot = styled.div`
  position: absolute;
  right: 49px;
  bottom: 0;
`;

const Watermark = styled.div`
  position: absolute;
  right: 4px;
  bottom: 14px;
  font-family: "Liberation Sans", Arial, sans-serif;
  font-size: 34.5px;
  line-height: 36px;
  white-space: nowrap;
  color: rgba(232, 232, 232, 0.85);
  text-shadow: 1px 1px 1px #9a9a9a;
`;
